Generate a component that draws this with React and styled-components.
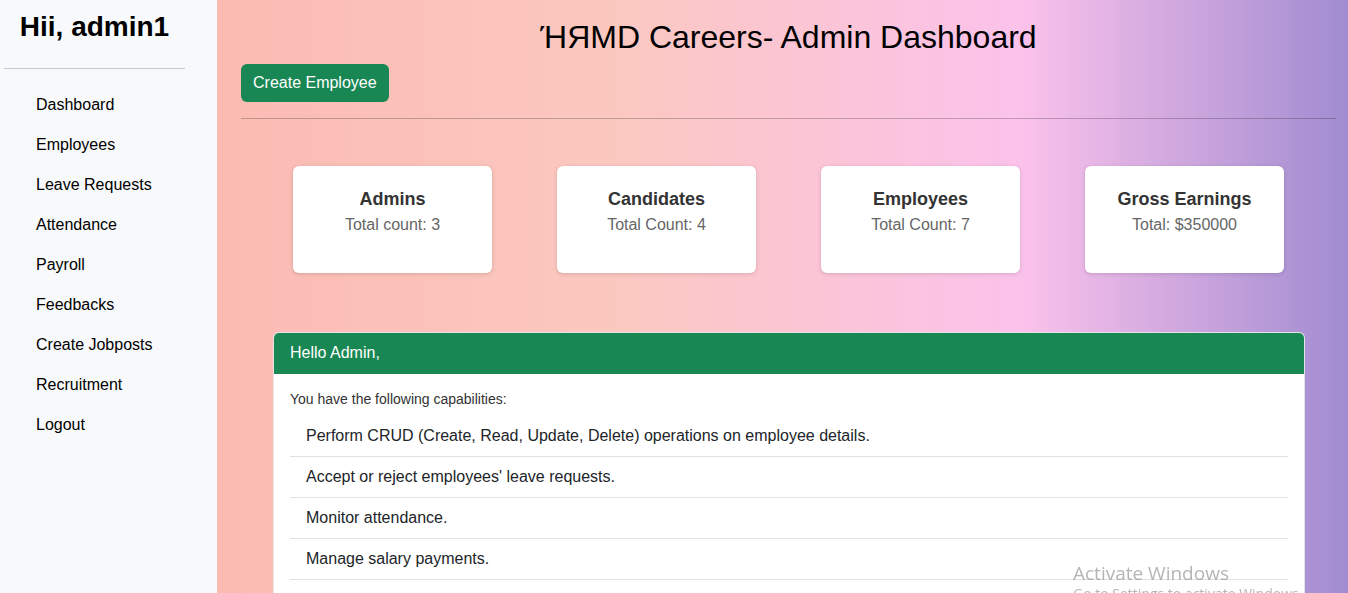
import React from "react";
import styled, { createGlobalStyle } from "styled-components";

const GlobalStyle = createGlobalStyle`
  * { box-sizing: border-box; }
  body {
    margin: 0;
    font-family: "Liberation Sans", Arial, sans-serif;
    color: #212529;
    overflow: hidden;
  }
`;

const Layout = styled.div`
  display: flex;
  min-height: 100vh;
`;

const Sidebar = styled.aside`
  width: 217px;
  flex-shrink: 0;
  background-color: #f8f9fa;
  padding: 0 32px 0 4px;
`;

const SideTitle = styled.h2`
  margin: 0;
  padding-top: 11px;
  height: 68px;
  text-align: center;
  font-size: 28px;
  font-weight: 700;
  color: #000;
`;

const SideDivider = styled.hr`
  margin: 0;
  border: none;
  border-top: 1px solid #c8c8c8;
`;

const NavList = styled.ul`
  list-style: none;
  margin: 0;
  padding: 16px 0 0 32px;
`;

const NavItem = styled.li`
  height: 40px;
  line-height: 40px;
  font-size: 16px;
  color: #000;
  cursor: pointer;
`;

const Main = styled.main`
  flex: 1;
  padding: 0 12px 0 24px;
  background: linear-gradient(to right, #fbbbb3 0%, #fbc8c0 35%, #fbc2eb 71%, #a18cd1 100%);
`;

const Title = styled.h1`
  margin: 0;
  padding-top: 19px;
  height: 64px;
  text-align: center;
  font-size: 32px;
  font-weight: 400;
  color: #000;
`;

const Button = styled.button`
  height: 38px;
  padding: 0 12px;
  border: none;
  border-radius: 6px;
  background-color: #198754;
  color: #fff;
  font-family: inherit;
  font-size: 16px;
  cursor: pointer;
`;

const Divider = styled.hr`
  margin: 16px 0 0;
  border: none;
  border-top: 1px solid rgba(0, 0, 0, 0.22);
`;

const StatRow = styled.div`
  display: grid;
  grid-template-columns: repeat(4, 264px);
  justify-content: center;
  justify-items: center;
  margin-top: 47px;
`;

const StatCard = styled.div`
  width: 199px;
  height: 107px;
  background: #fff;
  border-radius: 6px;
  box-shadow: 0 1px 4px rgba(0, 0, 0, 0.15);
  text-align: center;
  padding-top: 22px;
`;

const StatTitle = styled.div`
  font-size: 18px;
  font-weight: 700;
  color: #333;
  line-height: 22px;
`;

const StatValue = styled.div`
  font-size: 16px;
  color: #666;
  margin-top: 6px;
`;

const Panel = styled.section`
  margin: 59px 31px 0 32px;
  background: #fff;
  border: 1px solid rgba(0, 0, 0, 0.1);
  border-radius: 6px;
  overflow: hidden;
`;

const PanelHeader = styled.div`
  height: 41px;
  line-height: 40px;
  padding: 0 16px;
  background-color: #198754;
  color: #fff;
  font-size: 16px;
`;

const PanelBody = styled.div`
  padding: 16px 16px 32px;
`;

const Intro = styled.p`
  margin: 0;
  font-size: 14px;
  line-height: 18px;
  color: #333;
`;

const CapList = styled.ul`
  list-style: none;
  margin: 8px 0 0;
  padding: 0;
`;

const CapItem = styled.li`
  padding: 8px 16px;
  line-height: 24px;
  font-size: 16px;
  color: #212529;
  border-bottom: 1px solid #dee2e6;
`;

const Watermark = styled.div`
  position: fixed;
  left: 1073px;
  top: 561px;
  font-family: "Open Sans", "Liberation Sans", sans-serif;
  color: rgba(120, 120, 120, 0.55);
  pointer-events: none;
`;

const WatermarkTitle = styled.div`
  font-size: 19px;
  line-height: 24px;
`;

const WatermarkSub = styled.div`
  font-size: 14px;
  line-height: 18px;
`;

const navItems = [
  "Dashboard",
  "Employees",
  "Leave Requests",
  "Attendance",
  "Payroll",
  "Feedbacks",
  "Create Jobposts",
  "Recruitment",
  "Logout",
];

const stats = [
  { title: "Admins", value: "Total count: 3" },
  { title: "Candidates", value: "Total Count: 4" },
  { title: "Employees", value: "Total Count: 7" },
  { title: "Gross Earnings", value: "Total: $350000" },
];

const capabilities = [
  "Perform CRUD (Create, Read, Update, Delete) operations on employee details.",
  "Accept or reject employees' leave requests.",
  "Monitor attendance.",
  "Manage salary payments.",
];

const App = () => {
  return (
    <>
      <GlobalStyle />
      <Layout>
        <Sidebar>
          <SideTitle>Hii, admin1</SideTitle>
          <SideDivider />
          <NavList>
            {navItems.map((item) => (
              <NavItem key={item}>{item}</NavItem>
            ))}
          </NavList>
        </Sidebar>

        <Main>
          <Title>ΉЯMD Careers- Admin Dashboard</Title>
          <Button>Create Employee</Button>
          <Divider />

          <StatRow>
            {stats.map((s) => (
              <StatCard key={s.title}>
                <StatTitle>{s.title}</StatTitle>
                <StatValue>{s.value}</StatValue>
              </StatCard>
            ))}
          </StatRow>

          <Panel>
            <PanelHeader>Hello Admin,</PanelHeader>
            <PanelBody>
              <Intro>You have the following capabilities:</Intro>
              <CapList>
                {capabilities.map((c) => (
                  <CapItem key={c}>{c}</CapItem>
                ))}
              </CapList>
            </PanelBody>
          </Panel>
        </Main>
      </Layout>

      <Watermark>
        <WatermarkTitle>Activate Windows</WatermarkTitle>
        <WatermarkSub>Go to Settings to activate Windows.</WatermarkSub>
      </Watermark>
    </>
  );
};

export default App;
